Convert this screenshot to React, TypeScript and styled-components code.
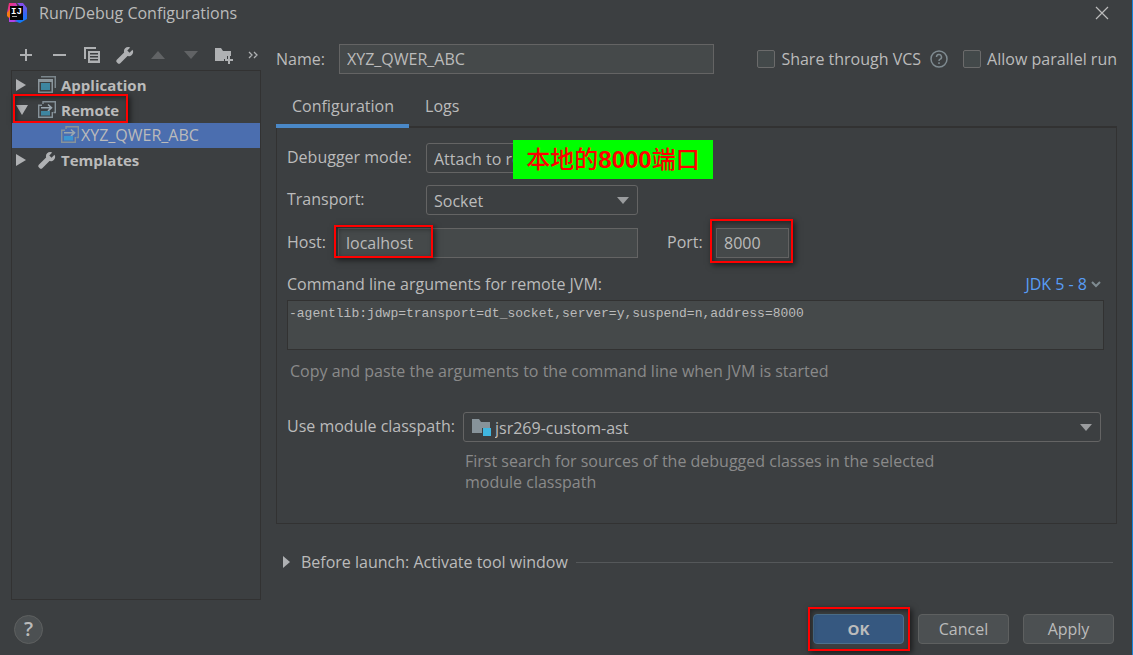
import React, { useState } from 'react';
import styled, { createGlobalStyle, css } from 'styled-components';

const c = {
  bg: '#3c3f41',
  text: '#bbbbbb',
  hint: '#8a8a8a',
  line: '#323232',
  field: '#45494a',
  fieldLine: '#646464',
  icon: '#afb1b3',
  iconOff: '#616365',
  accent: '#4a88c7',
  selection: '#4b6eaf',
  mark: '#ff0000',
};

const GlobalStyle = createGlobalStyle`
  * { box-sizing: border-box; }
  body { margin: 0; background: ${c.bg}; }
  body, button, input, select {
    font-family: 'Open Sans', 'Noto Sans CJK SC', sans-serif;
    font-size: 16px;
    line-height: 20px;
    color: ${c.text};
  }
  svg { display: block; flex: none; }
`;

const Window = styled.div`
  display: flex;
  flex-direction: column;
  min-height: 100vh;
  border-right: 1px solid #1883d7;
`;

const TitleBar = styled.header`
  display: flex;
  align-items: center;
  height: 28px;
  padding: 0 23px 2px 6px;
`;

const Title = styled.h1`
  flex: 1;
  margin: 0 0 0 11px;
  font-size: 16px;
  font-weight: 400;
`;

const IconButton = styled.button`
  display: flex;
  align-items: center;
  justify-content: center;
  padding: 0;
  border: 0;
  background: none;
`;

const Body = styled.div`
  display: flex;
  flex: 1;
  gap: 15px;
  padding: 12px 15px 0 11px;
`;

const Sidebar = styled.aside`
  display: flex;
  flex-direction: column;
  flex: none;
  width: 250px;
`;

const Toolbar = styled.div`
  display: flex;
  align-items: center;
  height: 30px;
`;

const ToolButton = styled(IconButton)<{ $narrow?: boolean }>`
  flex: none;
  width: ${p => (p.$narrow ? 22 : 33)}px;
  height: 22px;
  padding-right: ${p => (p.$narrow ? 0 : 3)}px;
`;

const Tree = styled.ul`
  flex: 1;
  margin: 0;
  padding: 2px 0;
  list-style: none;
  border: 1px solid ${c.line};
`;

const TreeRow = styled.li<{ $child?: boolean; $selected?: boolean }>`
  position: relative;
  display: flex;
  align-items: center;
  height: 25px;
  padding: 0 0 2px ${p => (p.$child ? 49 : 4)}px;
  font-size: ${p => (p.$child ? 16 : 15)}px;
  font-weight: ${p => (p.$child ? 400 : 700)};
  background: ${p => (p.$selected ? c.selection : 'transparent')};
`;

const Twisty = styled.span`
  width: 22px;
`;

const TreeText = styled.span<{ $tight?: boolean }>`
  margin-left: ${p => (p.$tight ? 2 : 5)}px;
`;

const markBox = css`
  position: absolute;
  border: 2px solid ${c.mark};
  box-shadow: 2px 2px 6px rgba(0, 0, 0, 0.6), inset 2px 2px 5px rgba(0, 0, 0, 0.4);
  pointer-events: none;
`;

const RemoteMark = styled.span`
  ${markBox}
  inset: -4px auto 0 1px;
  width: 115px;
`;

const HostMark = styled.span`
  ${markBox}
  inset: -3px auto 0 -4px;
  width: 99px;
`;

const AroundMark = styled.span`
  ${markBox}
  inset: -9px -4px -5px -6px;
`;

const ButtonMark = styled.span`
  ${markBox}
  inset: -8px -7px -8px -6px;
`;

const Main = styled.main`
  display: flex;
  flex-direction: column;
  flex: 1;
  min-width: 0;
`;

const NameRow = styled.div`
  display: flex;
  align-items: center;
  height: 30px;
  margin-top: 4px;
`;

const NameLabel = styled.label`
  flex: none;
  width: 63px;
`;

const TextInput = styled.input`
  width: 100%;
  min-width: 0;
  height: 30px;
  padding: 0 7px 1px;
  border: 1px solid ${c.fieldLine};
  border-radius: 0;
  background: ${c.field};
  outline: 0;
`;

const NameField = styled.div`
  flex: 0 1 375px;
`;

const Options = styled.div`
  display: flex;
  align-items: center;
  margin-left: auto;
`;

const CheckLabel = styled.label`
  display: flex;
  align-items: center;
  gap: 6px;
  white-space: nowrap;
`;

const Check = styled.input`
  appearance: none;
  width: 18px;
  height: 18px;
  margin: 0;
  border: 1px solid #6b6b6b;
  border-radius: 2px;
  background: #43494a;
  &:checked { background: ${c.accent}; }
`;

const HelpHint = styled(IconButton)`
  margin: 0 15px 0 9px;
`;

const Tabs = styled.div`
  display: flex;
  height: 40px;
  margin-top: 14px;
  background: linear-gradient(${c.line}, ${c.line}) 0 38px / 100% 2px no-repeat;
`;

const Tab = styled.button<{ $active?: boolean }>`
  padding: 0 15px 0 16px;
  border: 0;
  border-bottom: 4px solid ${p => (p.$active ? c.accent : 'transparent')};
  background: none;
`;

const Panel = styled.section`
  display: flex;
  flex-direction: column;
  padding: 15px 12px 30px 10px;
  border: 1px solid ${c.line};
  border-top: 0;
`;

const FormGrid = styled.div`
  display: grid;
  grid-template-columns: 139px 212px;
  row-gap: 12px;
  align-items: center;
`;

const FieldLabel = styled.label`
  padding-bottom: 2px;
`;

const HostRow = styled.div`
  display: flex;
  align-items: center;
  margin-top: 13px;
`;

const HostLabel = styled(FieldLabel)`
  width: 51px;
`;

const FieldWrap = styled.div<{ $w: number }>`
  position: relative;
  flex: none;
  width: ${p => p.$w}px;
`;

const PortLabel = styled(FieldLabel)`
  width: 49px;
  margin-left: 29px;
`;

const Combo = styled.div<{ $grow?: boolean }>`
  position: relative;
  display: grid;
  grid-template-columns: auto 1fr auto;
  align-items: center;
  flex: ${p => (p.$grow ? '1' : 'none')};
  height: 30px;
  padding: 0 8px 0 7px;
  border: 1px solid ${c.fieldLine};
  border-radius: 3px;

  & > svg { grid-row: 1; pointer-events: none; }
  & > svg:last-of-type { grid-column: 3; }
`;

const Select = styled.select`
  grid-row: 1;
  grid-column: 2 / 4;
  width: 100%;
  height: 26px;
  padding: 1px 20px 0 0;
  border: 0;
  appearance: none;
  background: none;
  outline: 0;
`;

const Note = styled.div`
  position: absolute;
  top: -4px;
  left: 86px;
  display: flex;
  align-items: center;
  justify-content: center;
  width: 200px;
  height: 39px;
  background: #00ff00;
  color: ${c.mark};
  font: 500 24px/39px 'Liberation Sans', 'Noto Sans CJK SC', sans-serif;
  white-space: nowrap;
`;

const ArgsHeader = styled.div`
  display: flex;
  justify-content: space-between;
  margin-top: 16px;
  padding-right: 3px;
`;

const LinkButton = styled.button`
  display: flex;
  align-items: center;
  gap: 4px;
  padding: 0;
  border: 0;
  background: none;
  color: #589df6;
`;

const Args = styled.textarea`
  display: block;
  width: 100%;
  height: 50px;
  margin-top: 6px;
  padding: 3px 1px;
  border: 1px solid ${c.line};
  border-radius: 0;
  background: ${c.field};
  color: ${c.text};
  font: 13px/20px 'Liberation Mono', monospace;
  resize: none;
  outline: 0;
`;

const Hint = styled.p`
  margin: 11px 0 0 3px;
  color: ${c.hint};
`;

const ModuleRow = styled.div`
  display: flex;
  align-items: center;
  margin: 31px 3px 0 0;
`;

const ModuleLabel = styled(FieldLabel)`
  flex: none;
  width: 176px;
`;

const ModuleHint = styled.p`
  max-width: 480px;
  margin: 9px 0 0 178px;
  line-height: 21px;
  color: ${c.hint};
`;

const Launch = styled.div`
  display: flex;
  align-items: center;
  gap: 8px;
  margin-top: 28px;
  padding: 0 4px 0 6px;
`;

const LaunchButton = styled.button`
  display: flex;
  align-items: center;
  gap: 11px;
  padding: 0;
  border: 0;
  background: none;
`;

const Rule = styled.hr`
  flex: 1;
  margin: 0;
  border: 0;
  border-top: 1px solid #55585a;
`;

const Footer = styled.footer`
  display: flex;
  align-items: center;
  gap: 14px;
  height: 55px;
  padding: 3px 18px 0 14px;
`;

const RoundHelp = styled.button`
  width: 29px;
  height: 29px;
  margin-right: auto;
  padding: 0;
  border: 1px solid #5e6060;
  border-radius: 50%;
  background: #4c5052;
  font-size: 20px;
  font-weight: 600;
`;

const PushButton = styled.button<{ $primary?: boolean }>`
  position: relative;
  width: 91px;
  height: 30px;
  padding: 0;
  border: 1px solid ${p => (p.$primary ? '#4c708c' : '#5e6060')};
  border-radius: 4px;
  background: ${p => (p.$primary ? '#365880' : '#4c5052')};
  font-size: ${p => (p.$primary ? 15 : 16)}px;
  font-weight: ${p => (p.$primary ? 700 : 400)};
`;

const Logo = () => (
  <svg width="22" height="22" viewBox="0 0 22 22" aria-hidden="true">
    <defs>
      <linearGradient id="pink" x1="0" y1="0" x2="1" y2="1">
        <stop offset="0" stopColor="#fe315d" />
        <stop offset="0.5" stopColor="#c03bd0" />
        <stop offset="1" stopColor="#6b57ff" />
      </linearGradient>
      <linearGradient id="blue" x1="0" y1="0" x2="0" y2="1">
        <stop offset="0" stopColor="#8f4bea" />
        <stop offset="0.5" stopColor="#3b64f0" />
        <stop offset="1" stopColor="#087cfa" />
      </linearGradient>
    </defs>
    <path d="M3 1 10 1 14 10 9 19 3 20 3 14 1 11Z" fill="url(#pink)" />
    <path d="M1 11 4 7 5 14 3 16 1 14Z" fill="#f97a12" />
    <path d="M11 1 17 1 21 6 21 17 14 21 8 19 16 16 15 5Z" fill="url(#blue)" />
    <path d="M3 16 8 18 12 19 8 20 3 20Z" fill="#b342e6" />
    <rect x="4" y="4" width="13" height="14" fill="#050505" />
    <text x="5" y="12" fontFamily="Liberation Mono" fontWeight="700" fontSize="9" textAnchor="start" fill="#fff">IJ</text>
    <rect x="6" y="14" width="5" height="1" fill="#aaa" />
  </svg>
);

const Close = () => (
  <svg width="14" height="14" viewBox="0 0 14 14" stroke="#bbbbbb" strokeWidth="1.2">
    <path d="M1 1 13 13M13 1 1 13" />
  </svg>
);

const Wrench = () => (
  <svg width="18" height="18" viewBox="0 0 18 18" fill={c.icon}>
    <path d="M12.600 1C9.600.7 7.300 3.400 8.100 6.400L.8 13.700a2 2 0 0 0 0 2.600l.9.900a2 2 0 0 0 2.600 0L11.500 10C14.600 10.800 17.400 8.200 17.100 5.200L16.500 3.700 13.500 6.700 11.300 4.600 14.200 1.600Z" />
  </svg>
);

const Copy = () => (
  <svg width="18" height="18" viewBox="0 0 18 18" fill={c.icon}>
    <path d="M1 1h12v2H3v10H1Z" />
    <path fillRule="evenodd" d="M5 5h12v12H5ZM7 7v1.500h8V7ZM7 10v1.500h8V10ZM7 13v1.500h8V13Z" />
  </svg>
);

const NewFolder = () => (
  <svg width="20" height="20" viewBox="0 0 20 20" fill={c.icon}>
    <path d="M1 3h6l2 3h8v5h-4v3h-3v2H1Z" />
    <path d="M14 11h2v3h3v2h-3v3h-2v-3h-3v-2h3Z" />
  </svg>
);

const Chevrons = () => (
  <svg width="10" height="8" viewBox="0 0 10 8" fill="none" stroke={c.icon} strokeWidth="1.300">
    <path d="M1 1 4 4 1 7M6 1 9 4 6 7" />
  </svg>
);

const Triangle = ({ w, h, d, fill = c.icon }: { w: number; h: number; d: string; fill?: string }) => (
  <svg width={w} height={h} viewBox={`0 0 ${w} ${h}`} fill={fill}>
    <path d={d} />
  </svg>
);

const Right = () => <Triangle w={10} h={12} d="M0 0 10 6 0 12Z" />;
const Down = () => <Triangle w={12} h={10} d="M0 0H12L6 10Z" />;
const ComboArrow = () => <Triangle w={12} h={7} d="M0 0H12L6 7Z" fill="#9a9c9e" />;

const AppIcon = () => (
  <svg width="18" height="17" viewBox="0 0 18 17">
    <path d="M3 0h15v12h-1.500V1.500H3Z" fill="#7b868c" />
    <path fillRule="evenodd" d="M0 3h15v14H0ZM1.500 6v9.500h12V6Z" fill="#8b969c" />
    <rect x="3" y="7" width="9" height="7" fill="#3e86a0" />
  </svg>
);

const RemoteIcon = ({ bright }: { bright?: boolean }) => (
  <svg width="18" height="17" viewBox="0 0 18 17" fill="none" stroke="#87939a" strokeWidth="1.400">
    <path d="M5 3V.7H17.300V11.500H15.500" />
    <path d="M4 4.200H.7V16.300H14.300V11" />
    <path d="M3 6.700H13M10 3.500 13.500 6.700 10 10" stroke="#9aa7b0" strokeWidth="1.600" />
    <rect x="3" y="10" width="9" height="4.500" fill={bright ? '#3d95d0' : '#3e86a0'} stroke="none" />
  </svg>
);

const ModuleIcon = () => (
  <svg width="24" height="18" viewBox="0 0 24 18">
    <path d="M1 1h7l2 3h9v6h-8v5H1Z" fill="#87939a" />
    <rect x="12" y="10" width="8" height="8" fill="#40b6e0" />
  </svg>
);

const CircleHelp = () => (
  <svg width="18" height="18" viewBox="0 0 18 18" fill="none" stroke="#7f8b91" strokeWidth="1.500">
    <circle cx="9" cy="9" r="8" />
    <path d="M6.500 7a2.500 2.500 0 1 1 3.700 2.200C9.300 9.700 9 10 9 11M9 12.300v1.600" />
  </svg>
);

export default function App() {
  const [name, setName] = useState('XYZ_QWER_ABC');
  const [host, setHost] = useState('localhost');
  const [port, setPort] = useState('8000');

  return (
    <Window>
      <GlobalStyle />
      <TitleBar>
        <Logo />
        <Title>Run/Debug Configurations</Title>
        <IconButton aria-label="Close"><Close /></IconButton>
      </TitleBar>

      <Body>
        <Sidebar>
          <Toolbar>
            <ToolButton aria-label="Add">
              <Triangle w={14} h={14} d="M6 1h2v5h5v2H8v5H6V8H1V6h5Z" />
            </ToolButton>
            <ToolButton aria-label="Remove">
              <Triangle w={14} h={14} d="M1 6h13v2H1Z" />
            </ToolButton>
            <ToolButton aria-label="Copy"><Copy /></ToolButton>
            <ToolButton aria-label="Edit templates"><Wrench /></ToolButton>
            <ToolButton aria-label="Move up">
              <Triangle w={14} h={8} d="M0 8H14L7 0Z" fill={c.iconOff} />
            </ToolButton>
            <ToolButton aria-label="Move down">
              <Triangle w={14} h={8} d="M0 0H14L7 8Z" fill={c.iconOff} />
            </ToolButton>
            <ToolButton aria-label="New folder"><NewFolder /></ToolButton>
            <ToolButton aria-label="More" $narrow><Chevrons /></ToolButton>
          </Toolbar>
          <Tree role="tree">
            <TreeRow role="treeitem">
              <Twisty><Right /></Twisty>
              <AppIcon />
              <TreeText>Application</TreeText>
            </TreeRow>
            <TreeRow role="treeitem">
              <Twisty><Down /></Twisty>
              <RemoteIcon />
              <TreeText>Remote</TreeText>
              <RemoteMark />
            </TreeRow>
            <TreeRow role="treeitem" aria-selected $child $selected>
              <RemoteIcon bright />
              <TreeText $tight>XYZ_QWER_ABC</TreeText>
            </TreeRow>
            <TreeRow role="treeitem">
              <Twisty><Right /></Twisty>
              <Wrench />
              <TreeText>Templates</TreeText>
            </TreeRow>
          </Tree>
        </Sidebar>

        <Main>
          <NameRow>
            <NameLabel htmlFor="name">Name:</NameLabel>
            <NameField>
              <TextInput id="name" value={name} onChange={e => setName(e.target.value)} />
            </NameField>
            <Options>
              <CheckLabel><Check type="checkbox" />Share through VCS</CheckLabel>
              <HelpHint aria-label="About sharing"><CircleHelp /></HelpHint>
              <CheckLabel><Check type="checkbox" />Allow parallel run</CheckLabel>
            </Options>
          </NameRow>

          <Tabs role="tablist">
            <Tab role="tab" aria-selected $active>Configuration</Tab>
            <Tab role="tab">Logs</Tab>
          </Tabs>

          <Panel>
            <FormGrid>
              <FieldLabel htmlFor="mode">Debugger mode:</FieldLabel>
              <Combo>
                <Select id="mode"><option>Attach to remote JVM</option></Select>
                <ComboArrow />
                <Note>本地的<b>8000</b>端口</Note>
              </Combo>
              <FieldLabel htmlFor="transport">Transport:</FieldLabel>
              <Combo>
                <Select id="transport"><option>Socket</option></Select>
                <ComboArrow />
              </Combo>
            </FormGrid>

            <HostRow>
              <HostLabel htmlFor="host">Host:</HostLabel>
              <FieldWrap $w={300}>
                <TextInput id="host" value={host} onChange={e => setHost(e.target.value)} />
                <HostMark />
              </FieldWrap>
              <PortLabel htmlFor="port">Port:</PortLabel>
              <FieldWrap $w={73}>
                <TextInput id="port" value={port} onChange={e => setPort(e.target.value)} />
                <AroundMark />
              </FieldWrap>
            </HostRow>

            <ArgsHeader>
              <label htmlFor="args">Command line arguments for remote JVM:</label>
              <LinkButton>
                JDK 5 - 8
                <svg width="10" height="7" viewBox="0 0 10 7" fill="none" stroke="#7f8b91" strokeWidth="2">
                  <path d="M1 1 5 5 9 1" />
                </svg>
              </LinkButton>
            </ArgsHeader>
            <Args
              id="args"
              readOnly
              spellCheck={false}
              value="-agentlib:jdwp=transport=dt_socket,server=y,suspend=n,address=8000"
            />
            <Hint>Copy and paste the arguments to the command line when JVM is started</Hint>

            <ModuleRow>
              <ModuleLabel htmlFor="module">Use module classpath:</ModuleLabel>
              <Combo $grow>
                <ModuleIcon />
                <Select id="module"><option>jsr269-custom-ast</option></Select>
                <ComboArrow />
              </Combo>
            </ModuleRow>
            <ModuleHint>
              First search for sources of the debugged classes in the selected module classpath
            </ModuleHint>
          </Panel>

          <Launch>
            <LaunchButton>
              <Triangle w={8} h={12} d="M1 0 8 6 1 12Z" />
              Before launch: Activate tool window
            </LaunchButton>
            <Rule />
          </Launch>
        </Main>
      </Body>

      <Footer>
        <RoundHelp aria-label="Help">?</RoundHelp>
        <PushButton $primary>OK<ButtonMark /></PushButton>
        <PushButton>Cancel</PushButton>
        <PushButton>Apply</PushButton>
      </Footer>
    </Window>
  );
}
